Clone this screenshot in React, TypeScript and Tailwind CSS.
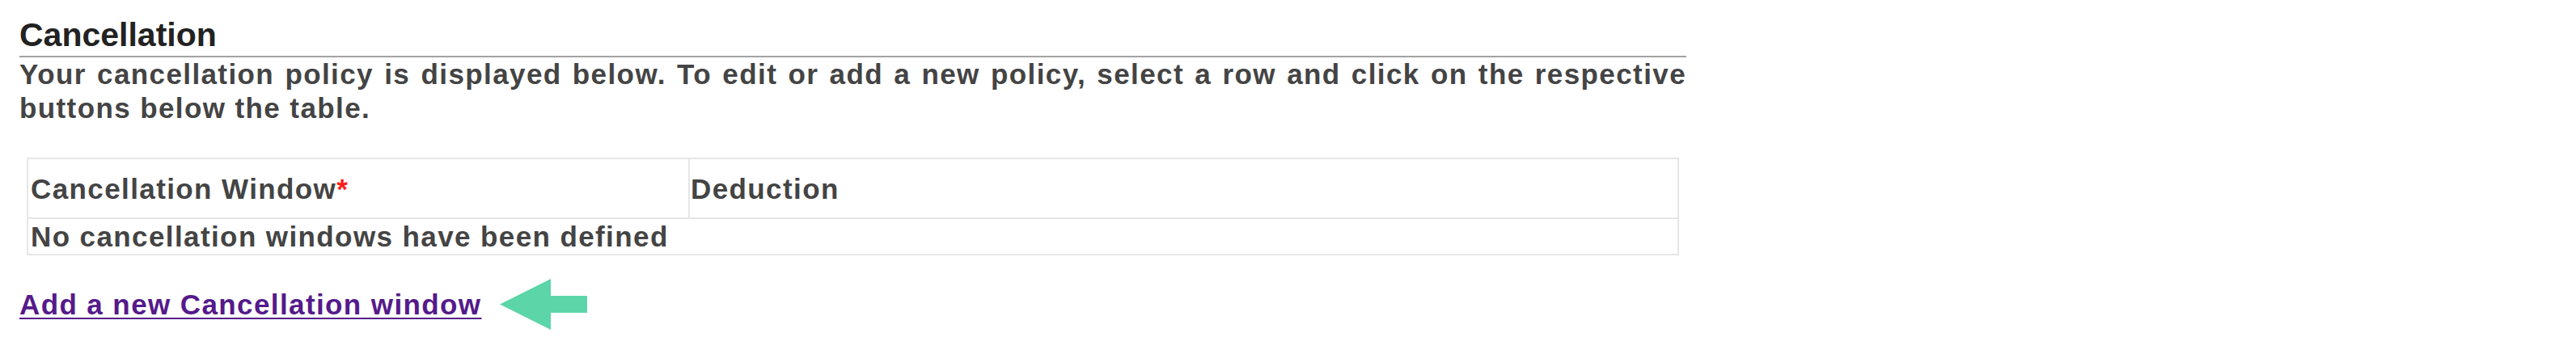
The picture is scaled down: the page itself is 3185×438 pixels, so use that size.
const font = { fontFamily: '"Liberation Sans", Arial, Helvetica, sans-serif' };

const ArrowLeft = () => (
    <svg width="108" height="63" viewBox="0 0 108 63" className="block shrink-0">
        <path d="M0 31.5 L63 0 L63 21 L108 21 L108 42 L63 42 L63 63 Z" fill="#5cd6a9" />
    </svg>
);

const App = () => {
    return (
        <div className="bg-white w-full min-h-[438px] font-bold" style={font}>
            <div className="ml-[24px] w-[2061px] pt-[20px]">
                {/* heading with rule */}
                <div className="border-b-2 border-[#a3a3a3] pb-[3px]">
                    <h2 className="text-[41px] leading-[46px] text-[#222222] font-bold">
                        Cancellation
                    </h2>
                </div>
                <p className="text-[35px] leading-[42px] tracking-[1.4px] text-[#444444] text-justify">
                    Your cancellation policy is displayed below. To edit or add a new policy, select a row and click on the respective buttons below the table.
                </p>

                {/* policy table */}
                <div className="mx-[9px] mt-[40px]">
                    <table className="w-[2043px] border-collapse border-2 border-[#e6e6e6] text-[35px] leading-[37px] tracking-[1.4px] text-[#444444] text-left">
                        <thead>
                            <tr className="h-[74px]">
                                <th className="w-[818px] border-2 border-[#e6e6e6] pl-[3px] align-middle font-bold">
                                    Cancellation Window<span className="text-[#ff1a1a]">*</span>
                                </th>
                                <th className="border-2 border-[#e6e6e6] pl-[1px] align-middle font-bold">
                                    Deduction
                                </th>
                            </tr>
                        </thead>
                        <tbody>
                            <tr className="h-[45px]">
                                <td colSpan={2} className="border-2 border-[#e6e6e6] pl-[3px] align-middle">
                                    No cancellation windows have been defined
                                </td>
                            </tr>
                        </tbody>
                    </table>
                </div>

                {/* add link */}
                <div className="mt-[29px] flex items-center gap-[23px]">
                    <a
                        href="#"
                        className="text-[35px] leading-[37px] tracking-[1.4px] text-[#551a8b] underline decoration-2 underline-offset-[4px]"
                    >
                        Add a new Cancellation window
                    </a>
                    <ArrowLeft />
                </div>
            </div>
        </div>
    );
};

export default App;
